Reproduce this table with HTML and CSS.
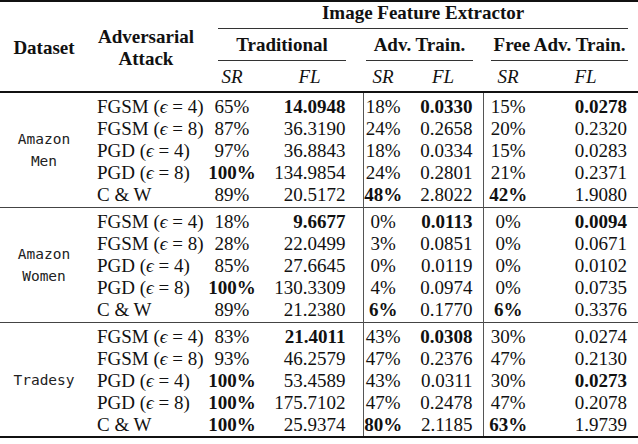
FILE: index.html
```html
<!DOCTYPE html>
<html lang="en">
<head>
<meta charset="utf-8">
<title>Adversarial attack results</title>
<link rel="stylesheet" href="styles.css">
</head>
<body>
<table class="results">
  <colgroup>
    <col class="c-ds"><col class="c-atk">
    <col class="c-sr1"><col class="c-fl1">
    <col class="c-sr2"><col class="c-fl2">
    <col class="c-sr3"><col class="c-fl3">
  </colgroup>
  <thead>
    <tr>
      <th rowspan="3" class="h-ds">Dataset</th>
      <th rowspan="3" class="h-atk">Adversarial<br>Attack</th>
      <th colspan="6" class="h-top"><div class="rule-top">Image Feature Extractor</div></th>
    </tr>
    <tr>
      <th colspan="2" class="h-grp"><div class="rule-grp g1">Traditional</div></th>
      <th colspan="2" class="h-grp"><div class="rule-grp g2">Adv. Train.</div></th>
      <th colspan="2" class="h-grp"><div class="rule-grp g3">Free Adv. Train.</div></th>
    </tr>
    <tr class="h-metrics">
      <th class="m">SR</th><th class="m">FL</th>
      <th class="m">SR</th><th class="m">FL</th>
      <th class="m">SR</th><th class="m">FL</th>
    </tr>
  </thead>
  <tbody class="grp first">
    <tr class="r-first">
      <td rowspan="5" class="ds">Amazon<br>Men</td>
      <td class="atk">FGSM (<i>ϵ</i> = 4)</td>
      <td class="sr">65%</td><td class="fl f1"><b>14.0948</b></td>
      <td class="sr s2">18%</td><td class="fl f2"><b>0.0330</b></td>
      <td class="sr s3">15%</td><td class="fl f3"><b>0.0278</b></td>
    </tr>
    <tr>
      <td class="atk">FGSM (<i>ϵ</i> = 8)</td>
      <td class="sr">87%</td><td class="fl f1">36.3190</td>
      <td class="sr s2">24%</td><td class="fl f2">0.2658</td>
      <td class="sr s3">20%</td><td class="fl f3">0.2320</td>
    </tr>
    <tr>
      <td class="atk">PGD (<i>ϵ</i> = 4)</td>
      <td class="sr">97%</td><td class="fl f1">36.8843</td>
      <td class="sr s2">18%</td><td class="fl f2">0.0334</td>
      <td class="sr s3">15%</td><td class="fl f3">0.0283</td>
    </tr>
    <tr>
      <td class="atk">PGD (<i>ϵ</i> = 8)</td>
      <td class="sr"><b>100%</b></td><td class="fl f1">134.9854</td>
      <td class="sr s2">24%</td><td class="fl f2">0.2801</td>
      <td class="sr s3">21%</td><td class="fl f3">0.2371</td>
    </tr>
    <tr class="r-last">
      <td class="atk">C &amp; W</td>
      <td class="sr">89%</td><td class="fl f1">20.5172</td>
      <td class="sr s2"><b>48%</b></td><td class="fl f2">2.8022</td>
      <td class="sr s3"><b>42%</b></td><td class="fl f3">1.9080</td>
    </tr>
  </tbody>
  <tbody class="grp">
    <tr class="r-first">
      <td rowspan="5" class="ds">Amazon<br>Women</td>
      <td class="atk">FGSM (<i>ϵ</i> = 4)</td>
      <td class="sr">18%</td><td class="fl f1"><b>9.6677</b></td>
      <td class="sr s2">0%</td><td class="fl f2"><b>0.0113</b></td>
      <td class="sr s3">0%</td><td class="fl f3"><b>0.0094</b></td>
    </tr>
    <tr>
      <td class="atk">FGSM (<i>ϵ</i> = 8)</td>
      <td class="sr">28%</td><td class="fl f1">22.0499</td>
      <td class="sr s2">3%</td><td class="fl f2">0.0851</td>
      <td class="sr s3">0%</td><td class="fl f3">0.0671</td>
    </tr>
    <tr>
      <td class="atk">PGD (<i>ϵ</i> = 4)</td>
      <td class="sr">85%</td><td class="fl f1">27.6645</td>
      <td class="sr s2">0%</td><td class="fl f2">0.0119</td>
      <td class="sr s3">0%</td><td class="fl f3">0.0102</td>
    </tr>
    <tr>
      <td class="atk">PGD (<i>ϵ</i> = 8)</td>
      <td class="sr"><b>100%</b></td><td class="fl f1">130.3309</td>
      <td class="sr s2">4%</td><td class="fl f2">0.0974</td>
      <td class="sr s3">0%</td><td class="fl f3">0.0735</td>
    </tr>
    <tr class="r-last">
      <td class="atk">C &amp; W</td>
      <td class="sr">89%</td><td class="fl f1">21.2380</td>
      <td class="sr s2"><b>6%</b></td><td class="fl f2">0.1770</td>
      <td class="sr s3"><b>6%</b></td><td class="fl f3">0.3376</td>
    </tr>
  </tbody>
  <tbody class="grp last">
    <tr class="r-first">
      <td rowspan="5" class="ds">Tradesy</td>
      <td class="atk">FGSM (<i>ϵ</i> = 4)</td>
      <td class="sr">83%</td><td class="fl f1"><b>21.4011</b></td>
      <td class="sr s2">43%</td><td class="fl f2"><b>0.0308</b></td>
      <td class="sr s3">30%</td><td class="fl f3">0.0274</td>
    </tr>
    <tr>
      <td class="atk">FGSM (<i>ϵ</i> = 8)</td>
      <td class="sr">93%</td><td class="fl f1">46.2579</td>
      <td class="sr s2">47%</td><td class="fl f2">0.2376</td>
      <td class="sr s3">47%</td><td class="fl f3">0.2130</td>
    </tr>
    <tr>
      <td class="atk">PGD (<i>ϵ</i> = 4)</td>
      <td class="sr"><b>100%</b></td><td class="fl f1">53.4589</td>
      <td class="sr s2">43%</td><td class="fl f2">0.0311</td>
      <td class="sr s3">30%</td><td class="fl f3"><b>0.0273</b></td>
    </tr>
    <tr>
      <td class="atk">PGD (<i>ϵ</i> = 8)</td>
      <td class="sr"><b>100%</b></td><td class="fl f1">175.7102</td>
      <td class="sr s2">47%</td><td class="fl f2">0.2478</td>
      <td class="sr s3">47%</td><td class="fl f3">0.2078</td>
    </tr>
    <tr class="r-last">
      <td class="atk">C &amp; W</td>
      <td class="sr"><b>100%</b></td><td class="fl f1">25.9374</td>
      <td class="sr s2"><b>80%</b></td><td class="fl f2">2.1185</td>
      <td class="sr s3"><b>63%</b></td><td class="fl f3">1.9739</td>
    </tr>
  </tbody>
</table>
</body>
</html>
```

FILE: styles.css
```css
html, body {
  margin: 0;
  padding: 0;
  background: #ffffff;
}

body {
  font-family: "Liberation Serif", "Times New Roman", serif;
  font-size: 19px;
  color: #111111;
}

.results {
  width: 638px;
  table-layout: fixed;
  border-collapse: collapse;
  border-top: 2px solid #111111;
  border-bottom: 2px solid #111111;
}

.c-ds { width: 88px; }
.c-atk { width: 120px; }
.c-sr1 { width: 48px; }
.c-fl1 { width: 107px; }
.c-sr2 { width: 40px; }
.c-fl2 { width: 80px; }
.c-sr3 { width: 50px; }
.c-fl3 { width: 105px; }

th, td {
  padding: 0;
  line-height: 22px;
  white-space: nowrap;
}

th {
  font-weight: bold;
  text-align: center;
}

.h-ds,
.h-atk {
  vertical-align: middle;
  padding-top: 2px;
}

.h-atk {
  padding-right: 4px;
}

.rule-top {
  margin: 0 10px;
  padding-bottom: 4px;
  border-bottom: 1px solid #333333;
}

.rule-grp {
  margin-top: 5px;
  padding-bottom: 4px;
  border-bottom: 1px solid #333333;
}

.g1 { margin-left: 10px; margin-right: 17px; }
.g2 { margin-left: 3px; margin-right: 10px; }
.g3 { margin-left: 8px; margin-right: 10px; }

.m {
  font-weight: normal;
  font-style: italic;
  padding-top: 5px;
  padding-bottom: 3px;
}

thead tr:last-child th,
.h-ds,
.h-atk {
  border-bottom: 2px solid #111111;
}

.grp + .grp tr.r-first td,
.grp + .grp td.ds {
  border-top: 1px solid #444444;
}

.ds {
  font-family: "DejaVu Sans Mono", "Liberation Mono", monospace;
  font-size: 14.5px;
  text-align: center;
  vertical-align: middle;
  color: #222222;
}

.atk {
  padding-left: 9px;
}

.sr {
  text-align: center;
}

.fl {
  text-align: right;
}

.f1 { padding-right: 17px; }
.f2 { padding-right: 10px; }
.f3 { padding-right: 11px; }

.s2,
.s3 {
  border-left: 1px solid #555555;
}

tr.r-first td {
  padding-top: 3px;
}

tr.r-first td.ds {
  padding-top: 0;
}

tr.r-last td {
  padding-bottom: 1px;
}

tr.r-last td.ds,
.grp.last tr.r-last td {
  padding-bottom: 0;
}

b {
  font-weight: bold;
}
```
